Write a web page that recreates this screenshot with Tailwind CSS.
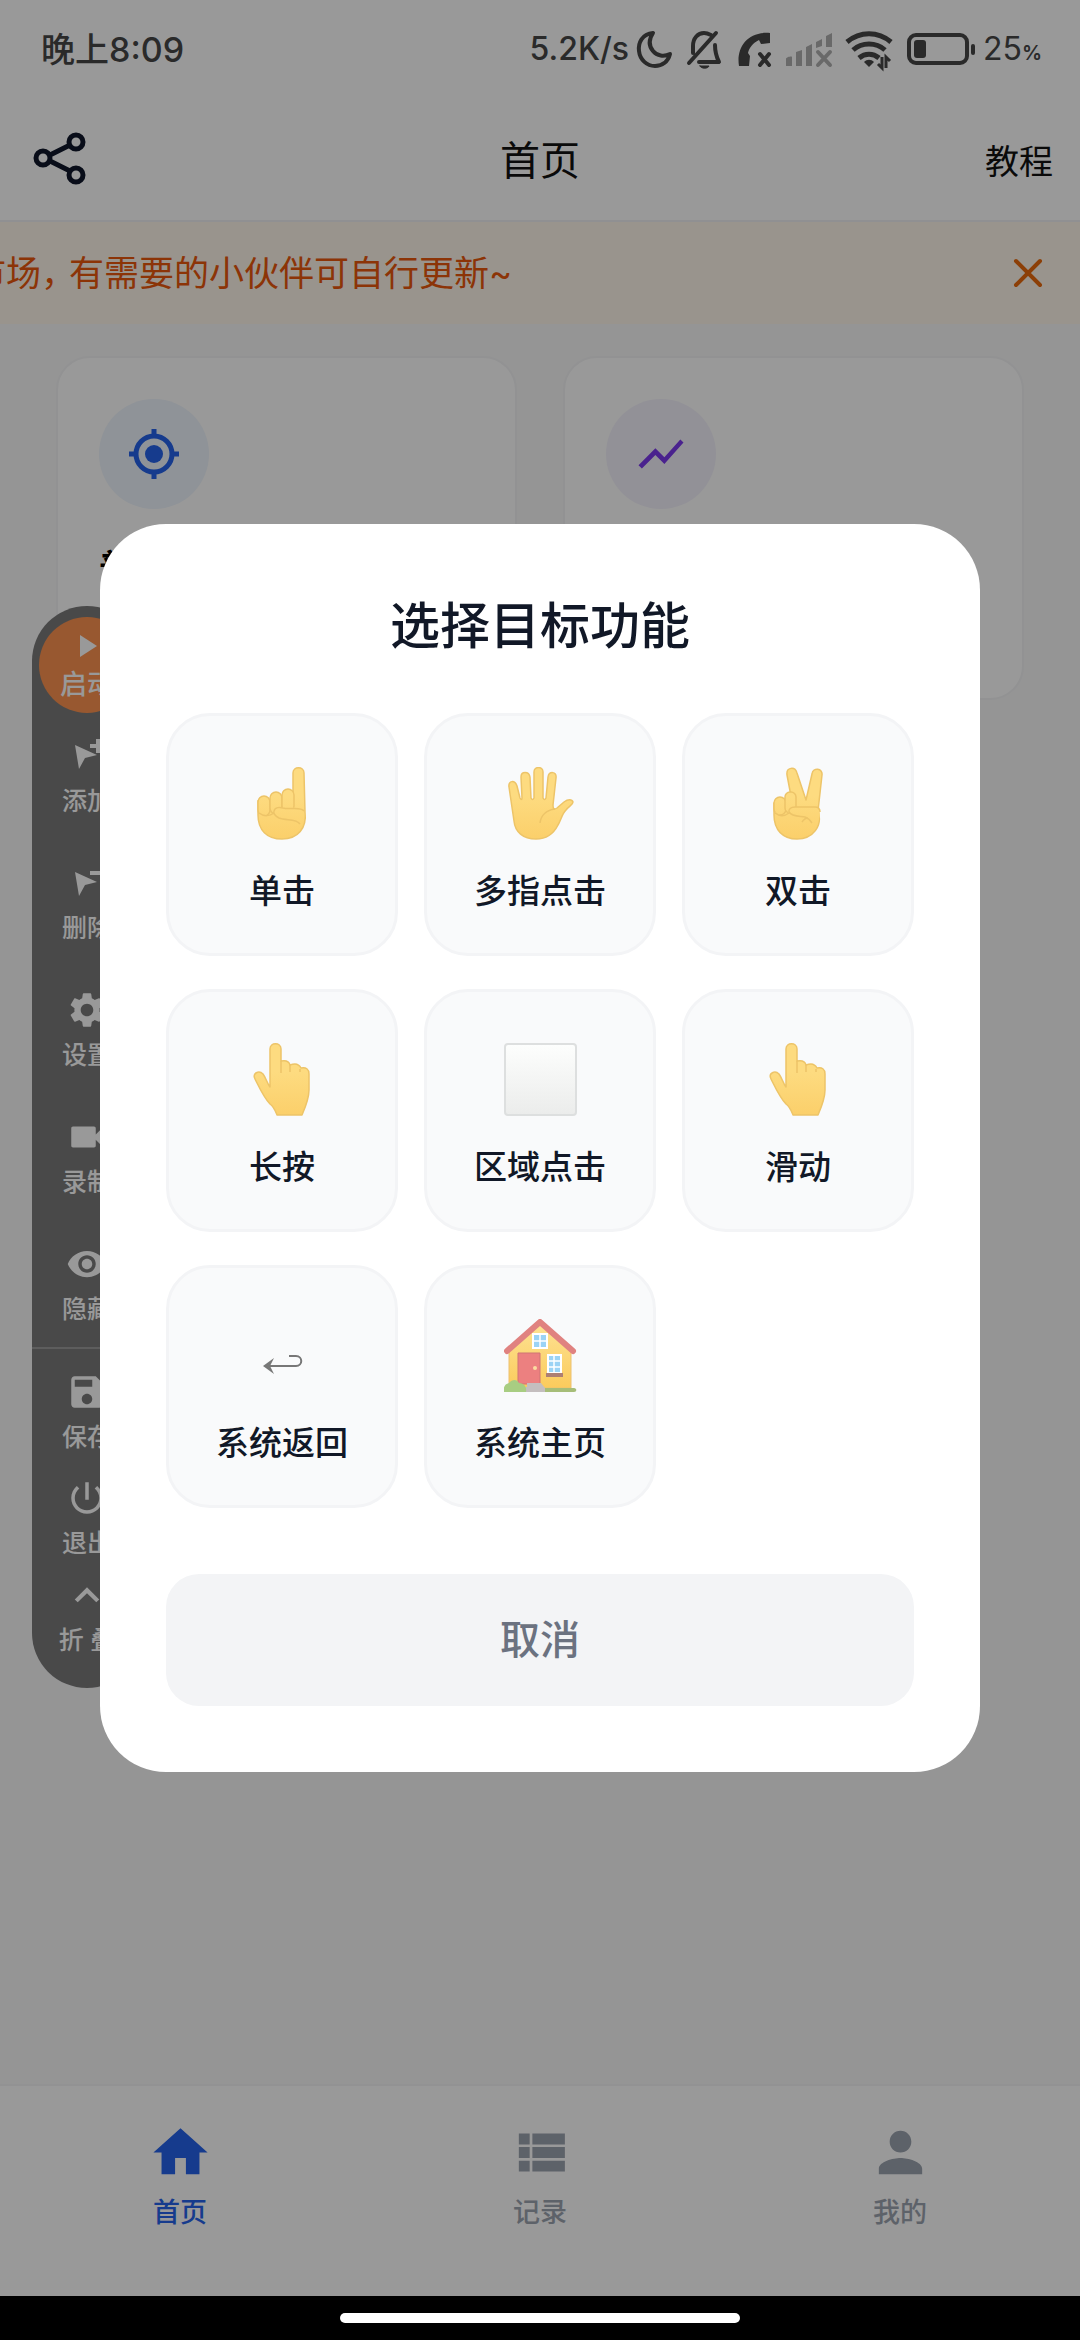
<!DOCTYPE html>
<html lang="zh-CN">
<head>
  <meta charset="UTF-8" />
  <meta name="viewport" content="width=device-width, initial-scale=1.0" />
  <title>首页</title>
  <script src="https://cdn.jsdelivr.net/npm/@tailwindcss/browser@4"></script>
</head>
<body class="bg-black font-['Inter','Noto_Sans_CJK_SC',sans-serif]">
  <div class="flex min-h-screen flex-col">
    <div class="relative flex flex-1 flex-col bg-[#f8f8f9]">

      <!-- status bar -->
      <div class="flex h-24 items-center justify-between bg-white pt-[2px] pr-[38px] pl-[41px] text-[#474747]">
        <span class="text-[34px] font-medium">晚上8:09</span>
        <div class="flex items-center">
          <span class="text-[32px] font-medium">5.2K/s</span>
          <svg class="h-12 w-[50px]" viewBox="0 0 50 48" fill="none" stroke="currentColor" stroke-width="4" stroke-linejoin="round"><path d="M24 8C13 9 9 18 10 26c1 9 8 15 16 15 7 0 13-4 15-12-6 3-13 2-17-3-5-6-4-12 0-18z" /></svg>
          <svg class="h-12 w-[50px]" viewBox="0 0 50 48" fill="none" stroke="currentColor" stroke-width="4" stroke-linecap="round" stroke-linejoin="round"><path d="M37 8L10 38M14 28v-7c0-8 5-13 11-13 3 0 5 1 7 2M36 20c0 7 1 11 4 17H20" /><path d="M21 41h9c-1 3-8 3-9 0z" fill="currentColor" stroke-width="1" /></svg>
          <svg class="h-12 w-[50px]" viewBox="0 0 50 48"><path d="M41 8v10l-9 1-2-4c-6 3-10 8-11 13l2 3-1 10H10C7 23 18 6 41 8z" fill="currentColor" /><path d="M31 29l9 11M40 29l-9 11" stroke="currentColor" stroke-width="4" stroke-linecap="round" /></svg>
          <svg class="h-12 w-[60px] text-[#b0b0b0]" viewBox="0 0 60 48" fill="currentColor"><path d="M7 34c0-2 6-3 6-2v9H7zM17 27l6-2v16h-6zM27 22l6-3v22h-6zM37 17l6-3v7l-6 2zM47 11l6-3v14h-6z" /><path d="M39 27l12 13M51 27L39 40" stroke="currentColor" stroke-width="4" stroke-linecap="round" /></svg>
          <svg class="h-12 w-[60px]" viewBox="0 0 60 48" fill="none" stroke="currentColor" stroke-width="5"><path d="M8 17c13-11 31-11 44 0M14 25c9-8 23-8 32 0M20 33c6-5 14-5 20 0" /><path d="M25 37c3-3 7-3 10 0l-5 5z" fill="currentColor" stroke="none" /><path d="M43 32v11l-4-4M47 43V32l4 4" stroke-width="3" /></svg>
          <svg class="h-12 w-[84px]" viewBox="0 0 84 48"><rect x="10" y="10" width="58" height="28" rx="7" fill="none" stroke="currentColor" stroke-width="4" /><rect x="15" y="15" width="12" height="18" rx="3" fill="currentColor" /><rect x="72" y="19" width="4" height="11" rx="2" fill="currentColor" /></svg>
          <span class="text-[32px]">25</span><span class="pt-2 text-[20px] font-semibold">%</span>
        </div>
      </div>

      <!-- header -->
      <header class="grid h-[126px] grid-cols-3 items-center border-b-2 border-[#f0f1f3] bg-white px-[27px] pt-[6px] text-[#111]">
        <button aria-label="分享" class="w-fit">
          <svg class="h-[66px] w-[66px]" viewBox="0 0 66 66" fill="none" stroke="#0f172a" stroke-width="5"><path d="M23 27L43 17M23 33L43 43" /><circle cx="16" cy="30" r="7" /><circle cx="49" cy="14" r="7" /><circle cx="49" cy="47" r="7" /></svg>
        </button>
        <h1 class="text-center text-[40px]">首页</h1>
        <a href="#" class="justify-self-end text-[34px]">教程</a>
      </header>

      <!-- notice -->
      <div class="flex h-[102px] items-center justify-between overflow-hidden bg-[#fff7eb] pr-[32px] text-[#ea580c]">
        <p class="-ml-[29px] whitespace-nowrap text-[35px]">市场<span class="inline-block w-7">，</span>有需要的小伙伴可自行更新~</p>
        <button aria-label="关闭">
          <svg class="h-10 w-10" viewBox="0 0 40 40" stroke="#ea6a0c" stroke-width="4" stroke-linecap="round"><path d="M8 8l24 24M32 8L8 32" /></svg>
        </button>
      </div>

      <!-- mode cards -->
      <main class="flex-1 px-14 pt-8">
        <div class="grid grid-cols-2 gap-[46px]">
          <section class="h-[344px] rounded-[34px] border-2 border-[#f3f4f5] bg-white px-[41px] pt-[41px]">
            <div class="flex h-[110px] w-[110px] items-center justify-center rounded-full bg-[#eef5fd]">
              <svg class="h-[54px] w-[54px]" viewBox="0 0 54 54" fill="none" stroke="#2563eb" stroke-width="5"><circle cx="27" cy="27" r="18" /><circle cx="27" cy="27" r="9" fill="#2563eb" stroke="none" /><path d="M27 2v7M27 45v7M2 27h7M45 27h7" /></svg>
            </div>
            <h2 class="mt-8 text-[36px] font-bold text-black">普</h2>
          </section>
          <section class="h-[344px] rounded-[34px] border-2 border-[#f3f4f5] bg-white px-[41px] pt-[41px]">
            <div class="flex h-[110px] w-[110px] items-center justify-center rounded-full bg-[#f4f2fc]">
              <svg class="h-[54px] w-[54px]" viewBox="0 0 24 24" fill="#7c3aed"><path d="M3.5 18.49l6-6.01 4 4L22 6.92l-1.41-1.41-7.09 7.97-4-4L2 16.99z" /></svg>
            </div>
          </section>
        </div>
      </main>

      <!-- tab bar -->
      <nav class="grid h-[212px] grid-cols-3 border-t-2 border-[#f3f4f5] bg-white pt-[34px] text-[27px] leading-[40px] font-medium text-[#9ca3af]">
        <a href="#" class="flex flex-col items-center gap-2 text-[#2563eb]">
          <svg class="h-[65px] w-[65px]" viewBox="0 0 24 24" fill="currentColor"><path d="M10 20v-6h4v6h5v-8h3L12 3 2 12h3v8z" /></svg>
          首页
        </a>
        <a href="#" class="flex flex-col items-center gap-2">
          <svg class="h-[65px] w-[65px]" viewBox="0 0 24 24" fill="currentColor"><path d="M4 14h4v-4H4v4zm0 5h4v-4H4v4zM4 9h4V5H4v4zm5 5h12v-4H9v4zm0 5h12v-4H9v4zM9 5v4h12V5H9z" /></svg>
          记录
        </a>
        <a href="#" class="flex flex-col items-center gap-2">
          <svg class="h-[65px] w-[65px]" viewBox="0 0 24 24" fill="currentColor"><path d="M12 12c2.21 0 4-1.79 4-4s-1.79-4-4-4-4 1.79-4 4 1.79 4 4 4zm0 2c-2.67 0-8 1.34-8 4v2h16v-2c0-2.66-5.33-4-8-4z" /></svg>
          我的
        </a>
      </nav>

      <!-- floating tool bar -->
      <aside class="absolute top-[606px] left-8 flex w-[110px] flex-col items-center rounded-[55px] bg-[#7b7b7b] pt-[11px] pb-8 text-[25px] leading-8 font-medium text-white">
        <button class="flex h-24 w-24 flex-col items-center rounded-full bg-[#fd9350] pt-[14px] text-[27px]">
          <svg class="h-[30px] w-[30px]" viewBox="0 0 30 30" fill="currentColor"><path d="M8 4v22l17-11z" /></svg>
          <span class="mt-2">启动</span>
        </button>
        <div class="mt-[22px] flex flex-col gap-[45px]">
          <button class="flex flex-col items-center gap-2">
            <svg class="h-[42px] w-[42px]" viewBox="0 0 42 42" fill="currentColor"><path d="M9 10l22 10-12 3-6 11zM30 4h4v5h5v4h-5v5h-4v-5h-6V9h6z" /></svg>
            添加
          </button>
          <button class="flex flex-col items-center gap-2">
            <svg class="h-[42px] w-[42px]" viewBox="0 0 42 42" fill="currentColor"><path d="M9 10l22 10-12 3-6 11zM24 9h15v4H24z" /></svg>
            删除
          </button>
          <button class="flex flex-col items-center gap-2">
            <svg class="h-[42px] w-[42px]" viewBox="0 0 24 24" fill="currentColor"><path d="M19.14 12.94c.04-.3.06-.61.06-.94 0-.32-.02-.64-.07-.94l2.03-1.58c.18-.14.23-.41.12-.61l-1.92-3.32c-.12-.22-.37-.29-.59-.22l-2.39.96c-.5-.38-1.03-.7-1.62-.94l-.36-2.54c-.04-.24-.24-.41-.48-.41h-3.84c-.24 0-.43.17-.47.41l-.36 2.54c-.59.24-1.13.57-1.62.94l-2.39-.96c-.22-.08-.47 0-.59.22L2.74 8.87c-.12.21-.08.47.12.61l2.03 1.58c-.05.3-.09.63-.09.94s.02.64.07.94l-2.03 1.58c-.18.14-.23.41-.12.61l1.92 3.32c.12.22.37.29.59.22l2.39-.96c.5.38 1.03.7 1.62.94l.36 2.54c.05.24.24.41.48.41h3.84c.24 0 .44-.17.47-.41l.36-2.54c.59-.24 1.13-.56 1.62-.94l2.39.96c.22.08.47 0 .59-.22l1.92-3.32c.12-.22.07-.47-.12-.61l-2.01-1.58zM12 15.6c-1.98 0-3.6-1.62-3.6-3.6s1.62-3.6 3.6-3.6 3.6 1.62 3.6 3.6-1.62 3.6-3.6 3.6z" /></svg>
            设置
          </button>
          <button class="flex flex-col items-center gap-2">
            <svg class="h-[42px] w-[42px]" viewBox="0 0 24 24" fill="currentColor"><path d="M17 10.5V7c0-.55-.45-1-1-1H4c-.55 0-1 .45-1 1v10c0 .55.45 1 1 1h12c.55 0 1-.45 1-1v-3.5l4 4v-11l-4 4z" /></svg>
            录制
          </button>
          <button class="flex flex-col items-center gap-2">
            <svg class="h-[42px] w-[42px]" viewBox="0 0 24 24" fill="currentColor"><path d="M12 4.500C7 4.500 2.730 7.610 1 12c1.730 4.390 6 7.500 11 7.500s9.270-3.110 11-7.500c-1.730-4.390-6-7.500-11-7.500zM12 17c-2.760 0-5-2.240-5-5s2.240-5 5-5 5 2.240 5 5-2.240 5-5 5zm0-8c-1.660 0-3 1.340-3 3s1.340 3 3 3 3-1.340 3-3-1.340-3-3-3z" /></svg>
            隐藏
          </button>
        </div>
        <hr class="mt-[22px] w-full border-t-2 border-[#9b9b9b]" />
        <div class="mt-[22px] flex flex-col gap-6">
          <button class="flex flex-col items-center gap-2">
            <svg class="h-[42px] w-[42px]" viewBox="0 0 24 24" fill="currentColor"><path d="M17 3H5c-1.110 0-2 .9-2 2v14c0 1.100.89 2 2 2h14c1.100 0 2-.9 2-2V7l-4-4zm-5 16c-1.660 0-3-1.340-3-3s1.340-3 3-3 3 1.340 3 3-1.340 3-3 3zm3-10H5V5h10v4z" /></svg>
            保存
          </button>
          <button class="flex flex-col items-center gap-2">
            <svg class="h-[42px] w-[42px]" viewBox="0 0 24 24" fill="currentColor"><path d="M13 3h-2v10h2V3zm4.830 2.170l-1.420 1.420C17.990 7.860 19 9.810 19 12c0 3.870-3.130 7-7 7s-7-3.130-7-7c0-2.190 1.010-4.140 2.580-5.420L6.170 5.170C4.230 6.820 3 9.260 3 12c0 4.970 4.030 9 9 9s9-4.030 9-9c0-2.740-1.230-5.180-3.170-6.830z" /></svg>
            退出
          </button>
        </div>
        <button class="mt-[15px] flex flex-col items-center gap-2">
          <svg class="h-[42px] w-[42px]" viewBox="0 0 24 24" fill="currentColor"><path d="M12 7.500l-7 7 1.700 1.700L12 11l5.300 5.200 1.700-1.700z" /></svg>
          折 叠
        </button>
      </aside>

      <!-- dialog -->
      <div class="absolute inset-0 flex items-center justify-center bg-black/40 px-[100px]">
        <div role="dialog" aria-labelledby="dialog-title" class="w-full rounded-[66px] bg-white p-[66px] text-[#111827]">
          <h2 id="dialog-title" class="mb-[51px] text-center text-[50px] leading-[72px] font-medium">选择目标功能</h2>
          <div class="grid grid-cols-3 gap-x-[26px] gap-y-[33px] text-[33px] leading-[50px] font-medium">
            <button class="flex flex-col items-center gap-[26px] rounded-[44px] border-3 border-[#f3f4f6] bg-[#f9fafb] pt-[51px] pb-[37px]">
              <svg class="h-[73px] w-[73px]" viewBox="0 0 73 73" fill="url(#skin)" stroke="#edc468" stroke-width="1.500">
                <defs>
                  <linearGradient id="skin" x1="0" y1="0" x2="0" y2="73" gradientUnits="userSpaceOnUse"><stop offset=".4" stop-color="#fddb80" /><stop offset="1" stop-color="#fbcf6a" /></linearGradient>
                </defs>
                <path d="M47 44V6c0-7 11-7 11 0l1 39c2 16-7 27-23 27-15 0-24-9-24-24V34z" />
                <rect x="12" y="29" width="12" height="20" rx="6" />
                <rect x="24" y="25" width="12" height="22" rx="6" />
                <rect x="36" y="22" width="12" height="23" rx="6" />
                <path d="M13 45c5 5 10 5 15 1-4-5-1-7 4-6l22 1c4 1 5 5 4 10-1 11-10 20-23 20-15 0-22-9-22-26z" stroke="none" />
                <path d="M13 46c5 4 11 3 15 0M54 57c-4-6-14-3-21-6-4-2-6-5-5-7 1-4 6-4 9-3 7 2 17-2 21 3" fill="none" />
              </svg>
              单击
            </button>
            <button class="flex flex-col items-center gap-[26px] rounded-[44px] border-3 border-[#f3f4f6] bg-[#f9fafb] pt-[51px] pb-[37px]">
              <svg class="h-[73px] w-[73px]" viewBox="0 0 73 73" fill="url(#skin)" stroke="#edc468" stroke-width="1.500" stroke-linejoin="round">
                <path d="M5 20c-1-7 6-7 8-1l3 12c1 2 2 2 2 0L17 10c0-6 8-6 9 0l1 21c1 2 2 2 3 0V5c0-6 9-6 9 0v26c1 2 2 2 3 0l2-21c1-6 9-6 8 1l-3 27c0 4 1 5 4 3l7-6c4-3 8-3 9 0 0 3-4 4-7 8-4 4-5 10-8 15-5 10-12 14-22 14-13 0-21-7-22-18L5 20z" />
                <path d="M51 42c-8 1-14 6-15 14" fill="none" />
              </svg>
              多指点击
            </button>
            <button class="flex flex-col items-center gap-[26px] rounded-[44px] border-3 border-[#f3f4f6] bg-[#f9fafb] pt-[51px] pb-[37px]">
              <svg class="h-[73px] w-[73px]" viewBox="0 0 73 73" fill="url(#skin)" stroke="#edc468" stroke-width="1.500" stroke-linejoin="round">
                <path d="M32 45L25 8c-1-8 8-9 10-2l9 27 6-26c1-7 11-6 10 1l-4 36c5 15-5 28-21 28-14 0-23-9-23-24V36z" />
                <rect x="12" y="30" width="12" height="18" rx="6" />
                <rect x="23" y="25" width="11" height="21" rx="5" />
                <path d="M13 45c5 5 10 3 13 1-1-5 3-7 7-6h20c5 1 6 6 4 12-2 11-11 19-22 19-14 0-22-9-22-26z" stroke="none" />
                <path d="M13 46c5 4 10 3 14 0-1-4 2-6 6-6h20c3 0 5 2 5 5M27 45c3 5 11 4 16 5 3 1 5 3 7 6M40 55c2-3 4-4 6-4" fill="none" />
              </svg>
              双击
            </button>
            <button class="flex flex-col items-center gap-[26px] rounded-[44px] border-3 border-[#f3f4f6] bg-[#f9fafb] pt-[51px] pb-[37px]">
              <svg class="h-[73px] w-[73px]" viewBox="0 0 73 73" fill="url(#skin)" stroke="#edc468" stroke-width="1.500" stroke-linejoin="round">
                <path d="M24 44V6c0-7 11-7 11 0v12c5-1 8 0 9 4 5-2 9-1 11 3 5-1 8 1 8 6v16c0 9-4 18-7 25H31c-2-5-3-8-7-11-6-6-11-17-15-25-3-6 4-9 8-5 3 4 4 9 7 13z" />
                <path d="M35 18v12M44 22v7M54 26v3" fill="none" />
              </svg>
              长按
            </button>
            <button class="flex flex-col items-center gap-[26px] rounded-[44px] border-3 border-[#f3f4f6] bg-[#f9fafb] pt-[51px] pb-[37px]">
              <svg class="h-[73px] w-[73px]" viewBox="0 0 73 73">
                <defs>
                  <linearGradient id="tile" x1="0" y1="0" x2="0" y2="1"><stop stop-color="#fdfefd" /><stop offset="1" stop-color="#ebeceb" /></linearGradient>
                </defs>
                <rect x="1" y="1" width="71" height="71" rx="3" fill="url(#tile)" stroke="#dddfdf" stroke-width="2" />
              </svg>
              区域点击
            </button>
            <button class="flex flex-col items-center gap-[26px] rounded-[44px] border-3 border-[#f3f4f6] bg-[#f9fafb] pt-[51px] pb-[37px]">
              <svg class="h-[73px] w-[73px]" viewBox="0 0 73 73" fill="url(#skin)" stroke="#edc468" stroke-width="1.500" stroke-linejoin="round">
                <path d="M24 44V6c0-7 11-7 11 0v12c5-1 8 0 9 4 5-2 9-1 11 3 5-1 8 1 8 6v16c0 9-4 18-7 25H31c-2-5-3-8-7-11-6-6-11-17-15-25-3-6 4-9 8-5 3 4 4 9 7 13z" />
                <path d="M35 18v12M44 22v7M54 26v3" fill="none" />
              </svg>
              滑动
            </button>
            <button class="flex flex-col items-center gap-[26px] rounded-[44px] border-3 border-[#f3f4f6] bg-[#f9fafb] pt-[51px] pb-[37px]">
              <svg class="h-[73px] w-[73px]" viewBox="0 0 73 73" fill="none" stroke="#777" stroke-width="2"><path d="M43 37h7c7 0 7 10 0 10H21" /><path d="M17 47l11-8-4 8 4 8z" fill="#777" stroke="none" /></svg>
              系统返回
            </button>
            <button class="flex flex-col items-center gap-[26px] rounded-[44px] border-3 border-[#f3f4f6] bg-[#f9fafb] pt-[51px] pb-[37px]">
              <svg class="h-[73px] w-[73px]" viewBox="0 0 73 73">
                <defs>
                  <linearGradient id="wall" x1="0" y1="0" x2="0" y2="1"><stop stop-color="#fde293" /><stop offset="1" stop-color="#fbcb5c" /></linearGradient>
                </defs>
                <path d="M5 32L36 5l31 27v37H5z" fill="url(#wall)" stroke="#ecc070" />
                <path d="M3 32L36 3l33 29" fill="none" stroke="#e08280" stroke-width="6" stroke-linejoin="round" stroke-linecap="round" />
                <path d="M29 15h14v14H29zM44 36h13v18H44z" fill="#9bd3f5" stroke="#fff" stroke-width="2" />
                <path d="M36 15v14M29 22h14M50 36v18M44 42h13M44 48h13" stroke="#fff" stroke-width="1.500" />
                <path d="M42 54h17v4H42z" fill="#ad7f73" />
                <path d="M14 34h22v31H14z" fill="#ec8080" stroke="#cf7474" />
                <circle cx="31" cy="49" r="2" fill="#fbdca0" />
                <path d="M38 69h32c3 0 3 4 0 4H34z" fill="#a6bd78" />
                <path d="M20 73v-5h3v-4h14l4 5v4z" fill="#c4bebf" />
                <path d="M0 73c-1-5 1-8 5-9 3-4 8-4 10 0 5 0 8 4 7 9z" fill="#a8cd82" />
              </svg>
              系统主页
            </button>
          </div>
          <button class="mt-[66px] h-[132px] w-full rounded-[33px] bg-[#f3f4f6] text-[40px] font-medium text-[#6b7280]">取消</button>
        </div>
      </div>
    </div>

    <!-- gesture bar -->
    <div class="flex h-11 items-center justify-center bg-black">
      <div class="h-[10px] w-[400px] rounded-full bg-white"></div>
    </div>
  </div>
</body>
</html>
